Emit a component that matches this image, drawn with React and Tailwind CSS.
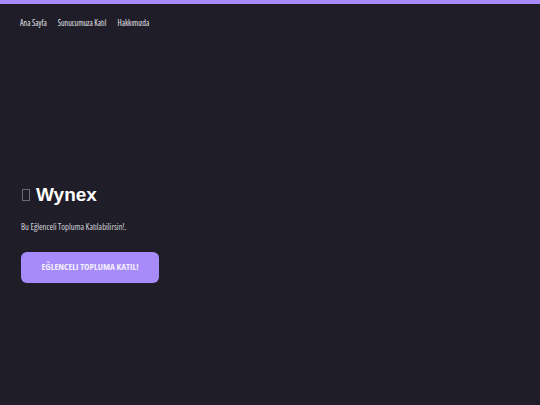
import React from "react";

const App = () => {
  return (
    <div className="min-h-screen w-full bg-[#1f1e28] font-['Open_Sans','Liberation_Sans',Arial,sans-serif] font-stretch-condensed text-white">
      <div className="h-[4px] w-full bg-[#a78bfa]" />

      <nav className="flex items-center gap-[11px] px-[20px] pt-[13px] text-[8px] text-[#e5e5ea]">
        <a href="#" className="hover:text-white">Ana Sayfa</a>
        <a href="#" className="hover:text-white">Sunucumuza Katıl</a>
        <a href="#" className="hover:text-white">Hakkımızda</a>
      </nav>

      <section className="flex flex-col items-start px-[21px] pt-[156px]">
        <h1 className="flex items-center gap-[6px] font-['Liberation_Sans',Arial,sans-serif] font-stretch-normal text-[19px] font-bold leading-none">
          <span className="ml-[1px] inline-block w-[8px] h-[12px] border border-[#6b6b75]" />
          Wynex
        </h1>
        <p className="mt-[17px] text-[8.6px] text-[#d4d4da]">
          Bu Eğlenceli Topluma Katılabilirsin!.
        </p>
        <button className="mt-[18px] flex h-[31px] w-[138px] items-center justify-center rounded-[6px] bg-[#a78bfa] text-[9.2px] font-bold text-[#f3f0ff] hover:bg-[#9775f5] transition duration-300">
          EĞLENCELI TOPLUMA KATIL!
        </button>
      </section>
    </div>
  );
};

export default App;
